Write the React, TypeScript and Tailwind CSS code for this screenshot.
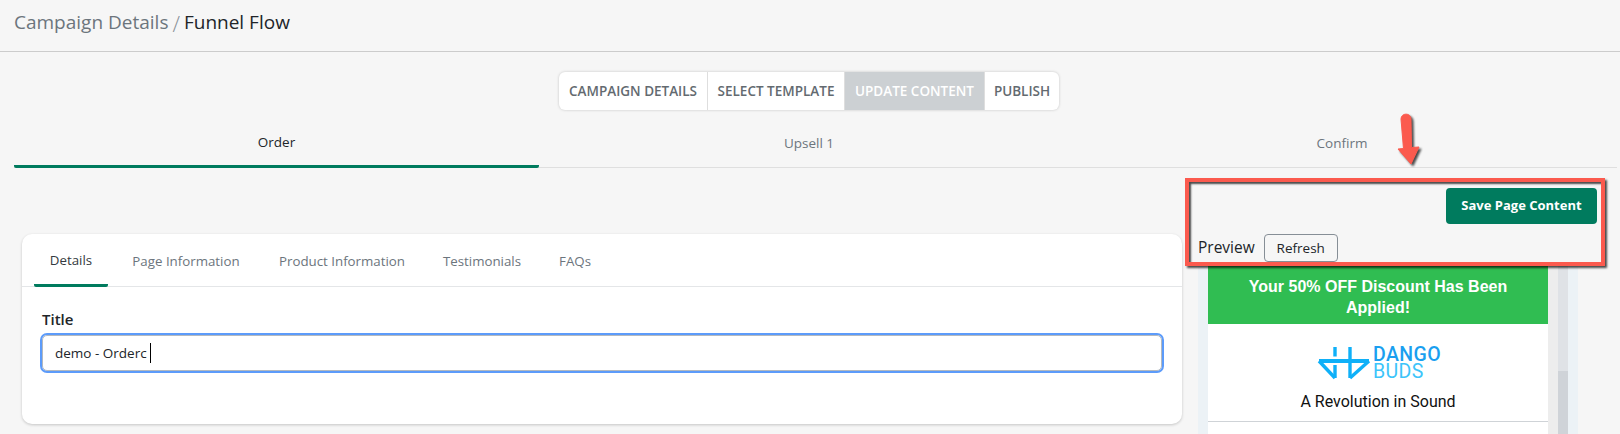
const font = "font-['Open_Sans','Noto_Sans',sans-serif]"

const steps = [
  { label: 'CAMPAIGN DETAILS', width: 'w-[148px]', active: false },
  { label: 'SELECT TEMPLATE', width: 'w-[137px]', active: false },
  { label: 'UPDATE CONTENT', width: 'w-[140px]', active: true },
  { label: 'PUBLISH', width: 'w-[75px]', active: false },
]

const pageTabs = [
  { label: 'Order', width: 'w-[525px]' },
  { label: 'Upsell 1', width: 'w-[540px]' },
  { label: 'Confirm', width: 'w-[526px]' },
]

const contentTabs = [
  { label: 'Details', margin: 'ml-[12px] mr-[5px] w-[74px]' },
  { label: 'Page Information', margin: 'w-[146px]' },
  { label: 'Product Information', margin: 'w-[166px]' },
  { label: 'Testimonials', margin: 'w-[114px]' },
  { label: 'FAQs', margin: 'w-[72px]' },
]

function DangoLogo() {
  return (
    <div className="flex h-[34px] items-center justify-center gap-[2px]">
      <svg width="54" height="34" viewBox="0 0 54 34" fill="none">
        <g stroke="#0fb0f8" strokeWidth="3.4" strokeLinejoin="round">
          <path d="M18 1V10.5M18 19V32" />
          <path d="M33 1V32" />
          <path d="M2 15H52" strokeWidth="4" />
          <path d="M2 15L18 32" />
          <path d="M52 15L33 32" />
        </g>
      </svg>
      <div className="flex w-[66px] flex-col font-['Roboto',sans-serif] text-[19.5px] leading-[17px] tracking-[0.4px]">
        <span className="font-medium text-[#1a9ff0]">DANGO</span>
        <span className="text-[#3cc4fa]">BUDS</span>
      </div>
    </div>
  )
}

function ArrowMark() {
  return (
    <svg
      className="absolute left-[1394px] top-[110px] drop-shadow-[2px_2px_1px_rgba(0,0,0,0.7)]"
      width="28"
      height="56"
      viewBox="0 0 28 56"
      fill="none"
    >
      <path
        d="M7 9C7 2.5 17 2.5 17 9L17.5 37.5L25 37L17 54L4 39L9.5 38.5Z"
        fill="#fb5a4e"
        stroke="#fb5a4e"
        strokeLinejoin="round"
      />
    </svg>
  )
}

export default function App() {
  return (
    <div className={`relative h-[434px] w-[1620px] overflow-hidden bg-[#f6f6f6] ${font}`}>
      {/* Breadcrumb */}
      <div className="flex h-[52px] items-center border-b border-[#cccccc] pb-[6px] pl-[14px] text-[19px]">
        <span className="text-[#6c757d]">Campaign Details</span>
        <span className="mx-[4px] text-[22px] font-light leading-none text-[#8a9299]">/</span>
        <span className="text-[#212529]">Funnel Flow</span>
      </div>

      {/* Stepper */}
      <div className="flex justify-center pr-[2px] pt-[20px]">
        <div className="flex h-[38px] overflow-hidden rounded-[6px] bg-white shadow-[0_0_3px_rgba(0,0,0,0.2)]">
          {steps.map((step, i) => (
            <div
              key={step.label}
              className={`flex items-center justify-center text-[13.5px] font-semibold ${step.width} ${
                step.active ? 'bg-[#ccd0d3] text-white' : 'text-[#636a70]'
              } ${i > 0 ? 'border-l border-[#dedede]' : ''}`}
            >
              {step.label}
            </div>
          ))}
        </div>
      </div>

      {/* Funnel page tabs */}
      <div className="ml-[14px] mr-[3px] mt-[13px] flex h-[45px] border-b border-[#dfdfdf]">
        {pageTabs.map((tab, i) => (
          <div
            key={tab.label}
            className={`flex items-center justify-center pb-[3px] text-[13.5px] ${tab.width} ${
              i === 0
                ? '-mb-px rounded-b-[2px] border-b-[3px] border-[#007b5e] text-[#212529]'
                : 'text-[#6c757d]'
            }`}
          >
            {tab.label}
          </div>
        ))}
      </div>

      <div className="flex pl-[22px] pt-[10px]">
        {/* Editor column */}
        <div className="mt-[56px] flex h-[190px] w-[1160px] flex-col rounded-[10px] bg-white shadow-[0_1px_3px_rgba(0,0,0,0.2)]">
          <div className="flex h-[53px] border-b border-[#e4e6e8]">
            {contentTabs.map((tab, i) => (
              <div
                key={tab.label}
                className={`flex items-center justify-center pt-[4px] text-[13.3px] ${tab.margin} ${
                  i === 0
                    ? '-mb-px rounded-b-[2px] border-b-[3px] border-[#007b5e] text-[#343a40]'
                    : 'text-[#6c757d]'
                }`}
              >
                {tab.label}
              </div>
            ))}
          </div>
          <div className="px-[20px] pt-[21px]">
            <div className="mb-[5px] text-[15px] font-semibold leading-[22px] text-[#212529]">Title</div>
            <div className="flex h-[36px] items-center rounded-[5px] border border-[#b4b9be] pl-[12px] text-[13.5px] text-[#212529] outline-2 outline-[#5c9bfa]">
              demo - Orderc
              <span className="ml-[3px] h-[20px] w-px bg-black" />
            </div>
          </div>
        </div>

        {/* Preview column */}
        <div className="ml-[16px] flex w-[399px] flex-col">
          <div className="flex justify-end pt-[10px]">
            <button className="h-[36px] w-[151px] rounded-[4px] bg-[#007b5e] text-[13px] font-bold text-white">
              Save Page Content
            </button>
          </div>
          <div className="mt-[10px] flex h-[28px] items-center gap-[9px]">
            <span className="text-[15.5px] text-[#212529]">Preview</span>
            <button className="h-[28px] w-[74px] rounded-[4px] border border-[#868e96] text-[13.5px] text-[#212529]">
              Refresh
            </button>
          </div>
          <div className="mt-[4px] flex h-[168px] w-[380px]">
            <div className="w-[10px] bg-[#ecf2f6]" />
            <div className="w-[340px] bg-white">
              <div className="flex h-[58px] items-center justify-center bg-[#30bd52] px-[30px] pt-[3px] text-center font-['Liberation_Sans',sans-serif] text-[16px] font-bold leading-[21px] text-white">
                Your 50% OFF Discount Has Been Applied!
              </div>
              <div className="pt-[22px]">
                <DangoLogo />
                <div className="mt-[10px] text-center font-['Roboto',sans-serif] text-[16px] leading-[24px] text-[#111111]">
                  A Revolution in Sound
                </div>
              </div>
              <div className="mt-[7px] border-t border-[#cfd3d7]" />
            </div>
            <div className="w-[10px] bg-[#ededed]" />
            <div className="flex w-[10px] flex-col bg-[#dfe2e6]">
              <div className="mt-[105px] flex-1 bg-[#cfd3d8]" />
            </div>
            <div className="w-[10px] bg-[#ecf2f6]" />
          </div>
        </div>
      </div>

      {/* Annotation */}
      <ArrowMark />
      <div className="absolute left-[1185px] top-[178px] h-[88px] w-[420px] border-[4px] border-[#fb5a4e] shadow-[2px_2px_2px_rgba(0,0,0,0.7),inset_2px_2px_2px_rgba(0,0,0,0.7)]" />
    </div>
  )
}
